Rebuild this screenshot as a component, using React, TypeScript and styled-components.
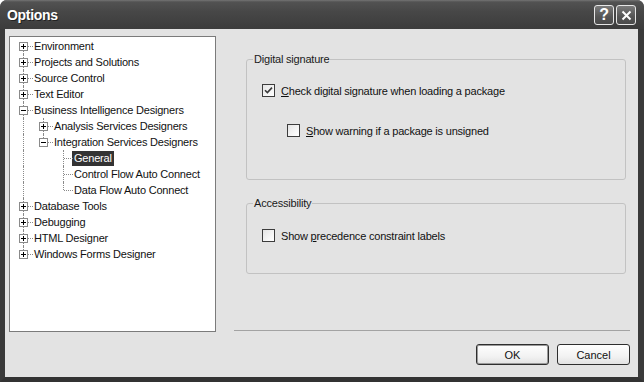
import React from 'react'
import styled, { createGlobalStyle, css } from 'styled-components'

const GlobalStyle = createGlobalStyle`
  html, body {
    margin: 0;
    padding: 0;
    background: #ffffff;
  }

  body {
    font-family: "Liberation Sans", Arial, sans-serif;
    font-size: 11px;
    letter-spacing: -0.2px;
    color: #000;
  }
`

const Window = styled.div`
  width: 644px;
  height: 382px;
  display: flex;
  flex-direction: column;
  border-radius: 7px 7px 0 0;
  overflow: hidden;
  background: #3a3a3a;
`

const TitleBar = styled.div`
  height: 29px;
  flex: none;
  display: flex;
  align-items: center;
  padding: 0 8px 0 7px;
  box-sizing: border-box;
  background: linear-gradient(#747474 0, #525252 2px, #474747 40%, #3c3c3c 100%);
`

const Title = styled.div`
  flex: 1;
  color: #fff;
  font-family: "Liberation Sans", Arial, sans-serif;
  font-weight: bold;
  font-size: 14px;
  letter-spacing: -0.3px;
  text-shadow: 1px 1px 0 #222;
  padding-top: 1px;
`

const CaptionButtons = styled.div`
  display: flex;
  gap: 2px;
  margin-top: 1px;
`

const CaptionButton = styled.div`
  width: 20px;
  height: 20px;
  box-sizing: border-box;
  border: 1px solid #e6e6e6;
  border-radius: 3px;
  background: linear-gradient(#7a7a7a, #555 60%, #4a4a4a);
  display: flex;
  align-items: center;
  justify-content: center;
  color: #fff;
  font-weight: bold;
  font-size: 16px;
`

const Frame = styled.div`
  flex: 1;
  display: flex;
  border-left: 5px solid #3a3a3a;
  border-right: 6px solid #3a3a3a;
  border-bottom: 5px solid #333;
  background: #e3e3e3;
  padding: 7px 8px 0 4px;
  gap: 18px;
  min-height: 0;
`

const TreePanel = styled.div`
  width: 207px;
  height: 296px;
  flex: none;
  box-sizing: border-box;
  border: 1px solid #7b7b7b;
  background: #fff;
  padding: 1px 0 0 3px;
`

const TreeRow = styled.div`
  display: flex;
  height: 16px;
  align-items: center;
`

const dotted = '1px dotted #8a8a8a'

const Guide = styled.div<{ $line: boolean }>`
  width: 20px;
  height: 16px;
  flex: none;
  position: relative;

  ${p => p.$line && css`
    &::before {
      content: '';
      position: absolute;
      left: 10px;
      top: 0;
      bottom: 0;
      border-left: ${dotted};
    }
  `}
`

const Joint = styled.div<{ $stem: 'full' | 'down' | 'up' }>`
  width: 20px;
  height: 16px;
  flex: none;
  position: relative;

  &::before {
    content: '';
    position: absolute;
    left: 10px;
    top: ${p => (p.$stem === 'down' ? '8px' : '0')};
    bottom: ${p => (p.$stem === 'up' ? '8px' : '0')};
    border-left: ${dotted};
  }

  &::after {
    content: '';
    position: absolute;
    left: 11px;
    right: 0;
    top: 8px;
    border-top: ${dotted};
  }
`

const Expander = styled.div<{ $open: boolean }>`
  position: absolute;
  left: 6px;
  top: 4px;
  width: 9px;
  height: 9px;
  box-sizing: border-box;
  border: 1px solid #8a8a8a;
  background: #fff;
  z-index: 1;

  &::before {
    content: '';
    position: absolute;
    left: 1px;
    top: 3px;
    width: 5px;
    height: 1px;
    background: #000;
  }

  ${p => !p.$open && css`
    &::after {
      content: '';
      position: absolute;
      left: 3px;
      top: 1px;
      width: 1px;
      height: 5px;
      background: #000;
    }
  `}
`

const NodeLabel = styled.span<{ $selected?: boolean }>`
  margin-left: -1px;
  padding: 0 2px;
  line-height: 15px;
  white-space: nowrap;
  color: #111;

  ${p => p.$selected && css`
    background: #333;
    color: #fff;
  `}
`

const RightPane = styled.div`
  flex: 1;
  display: flex;
  flex-direction: column;
  padding: 17px 0 12px;
`

const Group = styled.fieldset<{ $height: number }>`
  margin: 0 4px 0 12px;
  padding: 0;
  min-width: 0;
  height: ${p => p.$height}px;
  box-sizing: border-box;
  border: 1px solid #c2c2c2;
  border-radius: 3px;

  & + & {
    margin-top: 17px;
  }
`

const Legend = styled.legend`
  margin-left: 6px;
  padding: 0 1px;
  line-height: 13px;
  color: #1a1a1a;
`

const GroupBody = styled.div<{ $top: number }>`
  padding: ${p => p.$top}px 0 0 15px;
`

const CheckRow = styled.label<{ $indent?: number; $gap?: number }>`
  display: flex;
  align-items: center;
  gap: 6px;
  height: 13px;
  margin-left: ${p => p.$indent ?? 0}px;
  margin-top: ${p => p.$gap ?? 0}px;
  color: #111;
  white-space: nowrap;
`

const Box = styled.span`
  width: 13px;
  height: 13px;
  flex: none;
  box-sizing: border-box;
  border: 1px solid #3c3c3c;
  background: linear-gradient(135deg, #e4e4e4, #f8f8f8 70%, #fff);
  display: flex;
  align-items: center;
  justify-content: center;
`

const Key = styled.span`
  text-decoration: underline;
`

const Separator = styled.div`
  margin-top: auto;
  border-top: 1px solid #a3a3a3;
`

const ButtonRow = styled.div`
  display: flex;
  justify-content: flex-end;
  gap: 8px;
  margin-top: 13px;
`

const Button = styled.button<{ $default?: boolean }>`
  width: 73px;
  height: 21px;
  padding: 0;
  box-sizing: border-box;
  font-family: "Liberation Sans", Arial, sans-serif;
  font-size: 11px;
  color: #111;
  border-radius: 3px;
  border: 1px solid #2e2e2e;
  background: linear-gradient(#fefefe, #f2f2f2 60%, #e2e2e2);
  box-shadow: ${p => (p.$default ? 'inset 0 0 0 1px #9a9a9a' : 'none')};
`

type TreeNode = {
  label: string
  guides: boolean[]
  stem: 'full' | 'down' | 'up'
  kind: 'plus' | 'minus' | 'leaf'
  selected?: boolean
}

const nodes: TreeNode[] = [
  { label: 'Environment', guides: [], stem: 'down', kind: 'plus' },
  { label: 'Projects and Solutions', guides: [], stem: 'full', kind: 'plus' },
  { label: 'Source Control', guides: [], stem: 'full', kind: 'plus' },
  { label: 'Text Editor', guides: [], stem: 'full', kind: 'plus' },
  { label: 'Business Intelligence Designers', guides: [], stem: 'full', kind: 'minus' },
  { label: 'Analysis Services Designers', guides: [true], stem: 'full', kind: 'plus' },
  { label: 'Integration Services Designers', guides: [true], stem: 'up', kind: 'minus' },
  { label: 'General', guides: [true, false], stem: 'full', kind: 'leaf', selected: true },
  { label: 'Control Flow Auto Connect', guides: [true, false], stem: 'full', kind: 'leaf' },
  { label: 'Data Flow Auto Connect', guides: [true, false], stem: 'up', kind: 'leaf' },
  { label: 'Database Tools', guides: [], stem: 'full', kind: 'plus' },
  { label: 'Debugging', guides: [], stem: 'full', kind: 'plus' },
  { label: 'HTML Designer', guides: [], stem: 'full', kind: 'plus' },
  { label: 'Windows Forms Designer', guides: [], stem: 'up', kind: 'plus' },
]

const Check = () => (
  <svg width="9" height="9" viewBox="0 0 9 9">
    <path d="M1 4.2 L3.4 6.6 L8 1.6" fill="none" stroke="#3a3a3a" strokeWidth="1.6" />
  </svg>
)

const Close = () => (
  <svg width="11" height="11" viewBox="0 0 11 11">
    <path d="M1.5 1.5 L9.5 9.5 M9.5 1.5 L1.5 9.5" stroke="#fff" strokeWidth="2" />
  </svg>
)

export default function App() {
  return (
    <>
      <GlobalStyle />
      <Window>
        <TitleBar>
          <Title>Options</Title>
          <CaptionButtons>
            <CaptionButton>?</CaptionButton>
            <CaptionButton><Close /></CaptionButton>
          </CaptionButtons>
        </TitleBar>

        <Frame>
          <TreePanel>
            {nodes.map(node => (
              <TreeRow key={node.label}>
                {node.guides.map((line, i) => (
                  <Guide key={i} $line={line} />
                ))}
                <Joint $stem={node.stem}>
                  {node.kind !== 'leaf' && <Expander $open={node.kind === 'minus'} />}
                </Joint>
                <NodeLabel $selected={node.selected}>{node.label}</NodeLabel>
              </TreeRow>
            ))}
          </TreePanel>

          <RightPane>
            <Group $height={127}>
              <Legend>Digital signature</Legend>
              <GroupBody $top={18}>
                <CheckRow>
                  <Box><Check /></Box>
                  <span><Key>C</Key>heck digital signature when loading a package</span>
                </CheckRow>
                <CheckRow $indent={25} $gap={27}>
                  <Box />
                  <span><Key>S</Key>how warning if a package is unsigned</span>
                </CheckRow>
              </GroupBody>
            </Group>

            <Group $height={77}>
              <Legend>Accessibility</Legend>
              <GroupBody $top={19}>
                <CheckRow>
                  <Box />
                  <span>Show <Key>p</Key>recedence constraint labels</span>
                </CheckRow>
              </GroupBody>
            </Group>

            <Separator />
            <ButtonRow>
              <Button $default>OK</Button>
              <Button>Cancel</Button>
            </ButtonRow>
          </RightPane>
        </Frame>
      </Window>
    </>
  )
}
